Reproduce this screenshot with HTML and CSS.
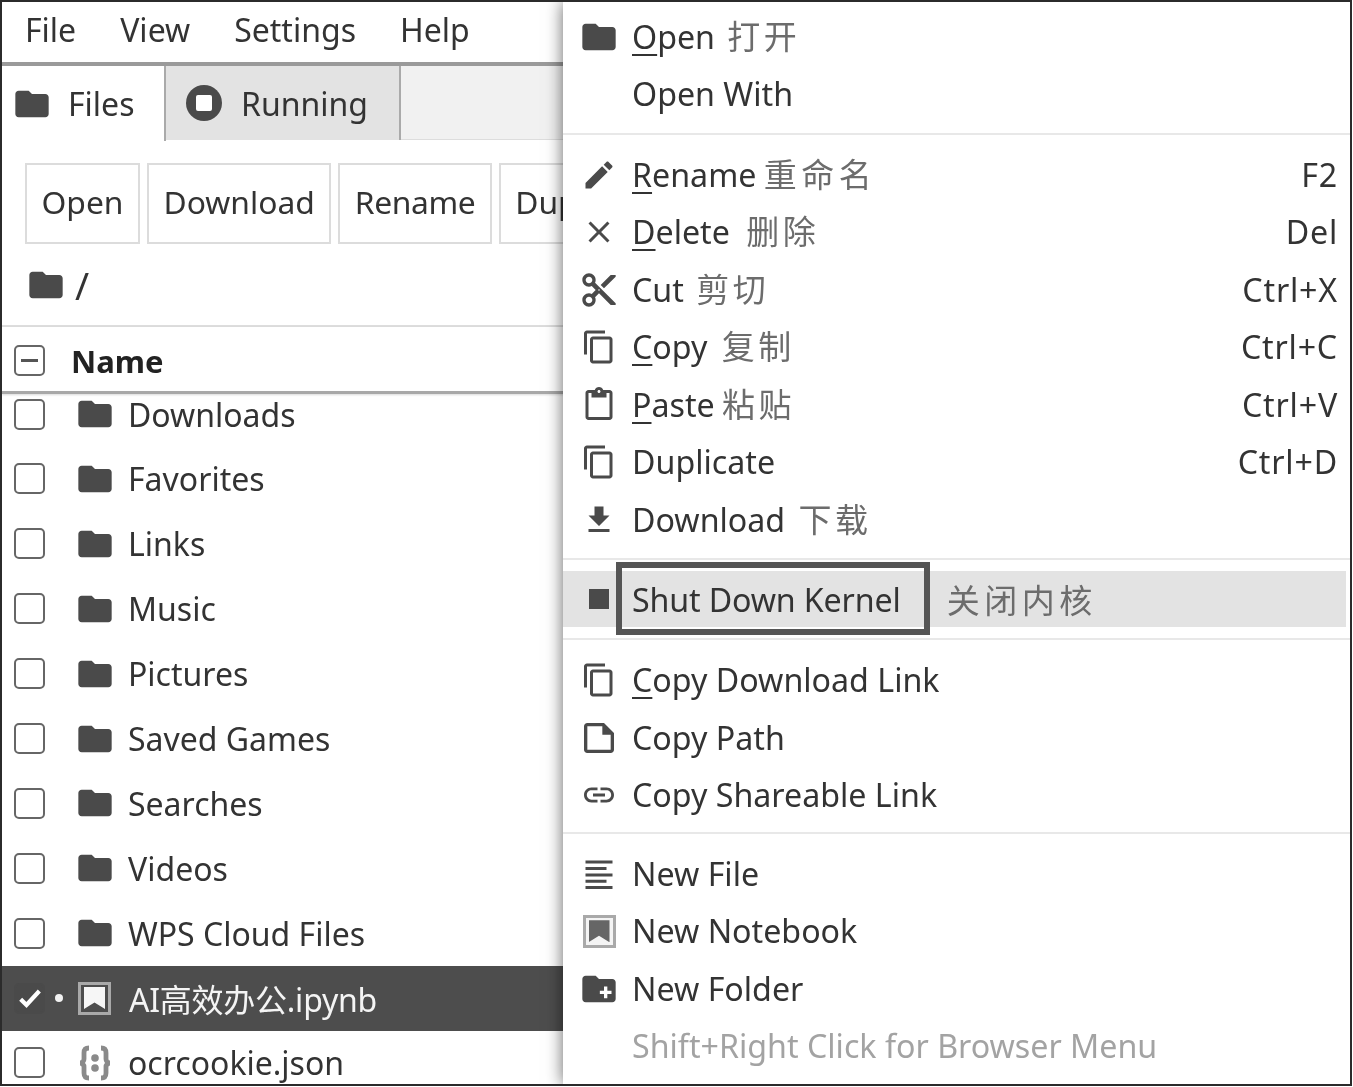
FILE: index.html
```html
<!DOCTYPE html>
<html lang="en">
<head>
<meta charset="utf-8">
<title>JupyterLab context menu</title>
<link rel="stylesheet" href="styles.css">
</head>
<body>
<svg class="defs" width="0" height="0" aria-hidden="true">
  <symbol id="i-folder" viewBox="0 0 24 24"><path d="M10 4H4c-1.1 0-1.99.9-1.99 2L2 18c0 1.1.9 2 2 2h16c1.1 0 2-.9 2-2V8c0-1.1-.9-2-2-2h-8l-2-2z"/></symbol>
  <symbol id="i-edit" viewBox="0 0 24 24"><path d="M3 17.25V21h3.75L17.81 9.94l-3.75-3.75L3 17.25zM20.71 7.04c.39-.39.39-1.02 0-1.41l-2.34-2.34c-.39-.39-1.02-.39-1.41 0l-1.83 1.83 3.75 3.75 1.83-1.83z"/></symbol>
  <symbol id="i-close" viewBox="0 0 24 24"><path d="M19 6.41L17.59 5 12 10.59 6.41 5 5 6.41 10.59 12 5 17.59 6.41 19 12 13.41 17.59 19 19 17.59 13.41 12z"/></symbol>
  <symbol id="i-cut" viewBox="0 0 24 24"><path d="M9.64 7.64c.23-.5.36-1.05.36-1.64 0-2.21-1.79-4-4-4S2 3.79 2 6s1.79 4 4 4c.59 0 1.14-.13 1.64-.36L10 12l-2.36 2.36C7.14 14.13 6.59 14 6 14c-2.21 0-4 1.79-4 4s1.79 4 4 4 4-1.79 4-4c0-.59-.13-1.14-.36-1.64L12 14l7 7h3v-1L9.64 7.64zM6 8c-1.1 0-2-.89-2-2s.9-2 2-2 2 .89 2 2-.9 2-2 2zm0 12c-1.1 0-2-.89-2-2s.9-2 2-2 2 .89 2 2-.9 2-2 2zm6-7.5c-.28 0-.5-.22-.5-.5s.22-.5.5-.5.5.22.5.5-.22.5-.5.5zM19 3l-6 6 2 2 7-7V3z"/></symbol>
  <symbol id="i-copy" viewBox="0 0 24 24"><path d="M16 1H4c-1.1 0-2 .9-2 2v14h2V3h12V1zm3 4H8c-1.1 0-2 .9-2 2v14c0 1.1.9 2 2 2h11c1.1 0 2-.9 2-2V7c0-1.1-.9-2-2-2zm0 16H8V7h11v14z"/></symbol>
  <symbol id="i-paste" viewBox="0 0 24 24"><path d="M19 2h-4.18C14.4.84 13.3 0 12 0c-1.3 0-2.4.84-2.82 2H5c-1.1 0-2 .9-2 2v16c0 1.1.9 2 2 2h14c1.1 0 2-.9 2-2V4c0-1.1-.9-2-2-2zm-7 0c.55 0 1 .45 1 1s-.45 1-1 1-1-.45-1-1 .45-1 1-1zm7 18H5V4h2v3h10V4h2v16z"/></symbol>
  <symbol id="i-download" viewBox="0 0 24 24"><path d="M19 9h-4V3H9v6H5l7 7 7-7zM5 18v2h14v-2H5z"/></symbol>
  <symbol id="i-stop" viewBox="0 0 24 24"><path d="M6 6h12v12H6z"/></symbol>
  <symbol id="i-file" viewBox="0 0 24 24"><path d="M15 3H5c-1.1 0-2 .9-2 2v14c0 1.1.9 2 2 2h14c1.100 0 2-.9 2-2V9l-6-6zm4 16H5V5h9v5h5v9z"/></symbol>
  <symbol id="i-link" viewBox="0 0 24 24"><path d="M3.900 12c0-1.710 1.390-3.100 3.100-3.100h4V7H7c-2.760 0-5 2.240-5 5s2.240 5 5 5h4v-1.900H7c-1.710 0-3.100-1.390-3.100-3.100zM8 13h8v-2H8v2zm9-6h-4v1.900h4c1.710 0 3.100 1.390 3.100 3.100s-1.390 3.100-3.100 3.100h-4V17h4c2.760 0 5-2.240 5-5s-2.240-5-5-5z"/></symbol>
  <symbol id="i-text" viewBox="0 0 24 24"><path d="M3 3h18v2H3zM3 7.300h14v2H3zM3 11.600h18v2H3zM3 15.900h14v2H3zM3 20h18v2H3z"/></symbol>
  <symbol id="i-newfolder" viewBox="0 0 24 24"><path fill-rule="evenodd" d="M10 4H4c-1.100 0-2 .9-2 2v12c0 1.100.9 2 2 2h16c1.100 0 2-.9 2-2V8c0-1.100-.9-2-2-2h-8l-2-2zm5 6.500h2V13h2.500v2H17v2.500h-2V15h-2.500v-2H15z"/></symbol>
  <symbol id="i-json" viewBox="2 2 20 20"><path d="M9 4.500C7 4.500 6.500 5.500 6.500 7v3c0 1.100-.7 2-2 2 1.300 0 2 .9 2 2v3c0 1.500.5 2.500 2.500 2.500M15 4.500c2 0 2.500 1 2.500 2.500v3c0 1.100.7 2 2 2-1.300 0-2 .9-2 2v3c0 1.500-.5 2.500-2.500 2.500" fill="none" stroke="currentColor" stroke-width="2.400"/><circle cx="12" cy="9.500" r="1.900"/><circle cx="12" cy="14.500" r="1.900"/></symbol>
</svg>

<div class="frame">
  <div class="app">
    <nav class="menubar">
      <span>File</span><span>View</span><span>Settings</span><span>Help</span>
    </nav>
    <div class="tabs">
      <div class="tab tab-active">
        <svg class="ico"><use href="#i-folder"/></svg><span>Files</span>
      </div>
      <div class="tab tab-idle">
        <span class="run-ico"><i></i></span><span>Running</span>
      </div>
    </div>
    <div class="toolbar">
      <button class="btn">Open</button>
      <button class="btn">Download</button>
      <button class="btn btn-rename">Rename</button>
      <button class="btn">Duplicate</button>
      <button class="btn">Delete</button>
    </div>
    <div class="crumbs"><svg class="ico"><use href="#i-folder"/></svg><span>/</span></div>
    <div class="listhead">
      <span class="check check-mixed"></span>
      <span class="headname">Name</span>
    </div>
    <div class="list">
      <div class="rows">
        <div class="row"><span class="check"></span><svg class="ico"><use href="#i-folder"/></svg><span>Downloads</span></div>
        <div class="row"><span class="check"></span><svg class="ico"><use href="#i-folder"/></svg><span>Favorites</span></div>
        <div class="row"><span class="check"></span><svg class="ico"><use href="#i-folder"/></svg><span>Links</span></div>
        <div class="row"><span class="check"></span><svg class="ico"><use href="#i-folder"/></svg><span>Music</span></div>
        <div class="row"><span class="check"></span><svg class="ico"><use href="#i-folder"/></svg><span>Pictures</span></div>
        <div class="row"><span class="check"></span><svg class="ico"><use href="#i-folder"/></svg><span>Saved Games</span></div>
        <div class="row"><span class="check"></span><svg class="ico"><use href="#i-folder"/></svg><span>Searches</span></div>
        <div class="row"><span class="check"></span><svg class="ico"><use href="#i-folder"/></svg><span>Videos</span></div>
        <div class="row"><span class="check"></span><svg class="ico"><use href="#i-folder"/></svg><span>WPS Cloud Files</span></div>
        <div class="row row-selected">
          <span class="check check-on"><svg viewBox="0 0 24 24"><path d="M4 13l5 5L20 6" fill="none" stroke="#fff" stroke-width="3.600"/></svg></span>
          <span class="dot"></span>
          <span class="nb nb-light"><i></i></span>
          <span class="fname-zh">AI高效办公.ipynb</span>
        </div>
        <div class="row"><span class="check"></span><svg class="ico ico-json"><use href="#i-json"/></svg><span>ocrcookie.json</span></div>
      </div>
    </div>

    <div class="menu">
      <section class="msec">
        <div class="mi"><svg class="ico"><use href="#i-folder"/></svg><span class="ml"><u>O</u>pen <em class="z-open">打开</em></span></div>
        <div class="mi"><span class="noicon"></span><span class="ml">Open With</span></div>
      </section>
      <section class="msec msec-edit">
        <div class="mi"><svg class="ico ico-s"><use href="#i-edit"/></svg><span class="ml"><u>R</u>ename <em class="z-rename">重命名</em></span><span class="ms">F2</span></div>
        <div class="mi"><svg class="ico ico-s"><use href="#i-close"/></svg><span class="ml"><u>D</u>elete <em class="z-delete">删除</em></span><span class="ms">Del</span></div>
        <div class="mi"><svg class="ico"><use href="#i-cut"/></svg><span class="ml">Cut <em>剪切</em></span><span class="ms">Ctrl+X</span></div>
        <div class="mi"><svg class="ico ico-s"><use href="#i-copy"/></svg><span class="ml"><u>C</u>opy <em class="z-copy">复制</em></span><span class="ms">Ctrl+C</span></div>
        <div class="mi"><svg class="ico ico-s"><use href="#i-paste"/></svg><span class="ml"><u>P</u>aste <em class="z-paste">粘贴</em></span><span class="ms">Ctrl+V</span></div>
        <div class="mi"><svg class="ico ico-s"><use href="#i-copy"/></svg><span class="ml">Duplicate</span><span class="ms">Ctrl+D</span></div>
        <div class="mi"><svg class="ico ico-s"><use href="#i-download"/></svg><span class="ml">Download <em class="z-dl">下载</em></span></div>
      </section>
      <section class="msec msec-hot">
        <div class="mi mi-hot"><svg class="ico"><use href="#i-stop"/></svg><span class="ml"><span class="focusbox">Shut Down Kernel</span><em class="hotzh">关闭内核</em></span></div>
      </section>
      <section class="msec msec-copy">
        <div class="mi"><svg class="ico ico-s"><use href="#i-copy"/></svg><span class="ml"><u>C</u>opy Download Link</span></div>
        <div class="mi"><svg class="ico"><use href="#i-file"/></svg><span class="ml">Copy Path</span></div>
        <div class="mi"><svg class="ico ico-s"><use href="#i-link"/></svg><span class="ml">Copy Shareable Link</span></div>
      </section>
      <section class="msec msec-last">
        <div class="mi"><svg class="ico ico-s"><use href="#i-text"/></svg><span class="ml">New File</span></div>
        <div class="mi"><span class="nb"><i></i></span><span class="ml">New Notebook</span></div>
        <div class="mi"><svg class="ico"><use href="#i-newfolder"/></svg><span class="ml">New Folder</span></div>
        <div class="mi mi-off"><span class="noicon"></span><span class="ml">Shift+Right Click for Browser Menu</span></div>
      </section>
    </div>
  </div>
</div>
</body>
</html>
```
FILE: styles.css
```css
* { box-sizing: border-box; }
html, body { margin: 0; padding: 0; background: #fff; }
body { width: 1353px; height: 1087px; overflow: hidden; font-family: "Noto Sans", "Noto Sans CJK SC", sans-serif; font-size: 32px; color: #333; }
.defs { position: absolute; }
.frame { width: 1352px; height: 1086px; border: 2px solid #2b2b2b; overflow: hidden; filter: blur(0.55px); }
.app { position: relative; height: 100%; background: #fff; }
.ico { width: 40px; height: 40px; fill: #4a4a4a; flex: none; display: block; }
.ico-s { width: 36px; height: 36px; margin: 0 2px; }

.menubar { height: 60px; display: flex; align-items: center; gap: 44px; padding: 0 0 6px 23px; }
.tabs { height: 78px; display: flex; background: #f1f1f1; border-top: 4px solid #9a9a9a; border-bottom: 1px solid #ddd; }
.tab { display: flex; align-items: center; height: 74px; }
.tab-active { width: 164px; background: #fff; padding-left: 10px; gap: 16px; border-right: 2px solid #aaa; margin-bottom: -1px; height: 75px; }
.tab-idle { width: 235px; background: #e3e3e3; padding-left: 20px; gap: 19px; border-right: 2px solid #aaa; }
.run-ico { width: 36px; height: 36px; border-radius: 50%; background: #4a4a4a; display: flex; align-items: center; justify-content: center; }
.run-ico i { width: 16px; height: 16px; background: #fff; border-radius: 2px; display: block; }

.toolbar { display: flex; gap: 7px; padding: 23px 0 0 23px; overflow: hidden; }
.btn { font: inherit; font-size: 31.8px; color: #333; height: 81px; padding: 0 14.5px 4px; background: #fff; border: 2px solid #dcdcdc; flex: none; }
.btn-rename { letter-spacing: -.4px; }
.crumbs { height: 83px; display: flex; align-items: center; gap: 9px; padding-left: 24px; border-bottom: 2px solid #ddd; }
.crumbs span { font-size: 38px; line-height: 1; }

.listhead { height: 67px; display: flex; align-items: center; padding: 2px 0 0 12px; gap: 26px; border-bottom: 3px solid #a8a8a8; box-shadow: 0 1px 2px rgba(0,0,0,.15); position: relative; z-index: 1; background: #fff; }
.headname { font-weight: 700; color: #222; font-size: 31px; padding-top: 2px; }

.list { height: 690px; overflow: hidden; }
.rows { margin-top: -12.4px; }
.row { height: 64.9px; display: flex; align-items: center; padding-left: 12px; }
.row .ico { margin-left: 29.5px; margin-right: 13.5px; }
.row .nb { margin-left: 15px; margin-right: 18px; }
.row-selected { background: #4d4d4d; color: #f4f4f4; }
.fname-zh { letter-spacing: -.25px; }

.check { width: 31px; height: 31px; border: 2px solid #666; border-radius: 5px; background: #fff; flex: none; display: flex; align-items: center; justify-content: center; }
.check-mixed::before { content: ""; width: 17px; height: 3px; background: #555; }
.check-on { background: #4a4a4a; border-color: #4a4a4a; }
.check-on svg { width: 28px; height: 28px; flex: none; }
.dot { width: 8px; height: 8px; border-radius: 50%; background: #f2f2f2; margin-left: 10px; flex: none; }
.nb { width: 33px; height: 33px; border: 3px solid #a9a9a9; display: flex; align-items: center; justify-content: center; flex: none; background: #f4f4f4; margin: 0 3.5px; }
.nb i { width: 21px; height: 22px; background: #666; clip-path: polygon(0 0, 100% 0, 100% 100%, 50% 70%, 0 100%); display: block; }
.nb-light { background: #4d4d4d; }
.nb-light i { background: #f6f6f6; }
.ico-json { fill: #8a8a8a; color: #8a8a8a; }

.menu { position: absolute; top: 0; bottom: 0; left: 561px; width: 787px; background: #fff; box-shadow: 0 0 16px rgba(0,0,0,.6); z-index: 2; font-size: 32.2px; }
.msec { padding: 6px 0 10px; border-bottom: 2px solid #e8e8e8; }
.msec + .msec { padding-top: 11px; }
.msec-edit.msec { padding-bottom: 9px; }
.msec-hot.msec { padding: 11px 4px 11px 0; }
.msec-copy.msec { padding: 12px 0 8px; }
.msec-last { border-bottom: 0; }
.mi { height: 57.5px; display: flex; align-items: center; padding: 0 12px 0 16px; }
.noicon { width: 40px; flex: none; }
.ml { margin-left: 13px; flex: 1; white-space: nowrap; line-height: 46px; }
.ms { flex: none; letter-spacing: .8px; line-height: 46px; }
.ml u { text-decoration-thickness: 2px; text-underline-offset: 5px; }
em { font-style: normal; font-size: 33px; line-height: 1; color: #6c6c6c; letter-spacing: 3.500px; margin-left: 4px; }
.z-open { margin-left: 4px; }
.z-rename { margin-left: -1px; letter-spacing: 4.500px; }
.z-delete { margin-left: 8px; }
.z-copy { margin-left: 6px; }
.z-paste { margin-left: -1px; }
.z-dl { margin-left: 5px; }
.mi-hot { background: #e3e3e3; height: 56px; }
.focusbox { display: inline-flex; align-items: center; height: 73px; border: 6px solid #555; margin: -8px 0 -8px -16px; padding: 3px 23px 0 10px; vertical-align: middle; letter-spacing: -.15px; }
.hotzh { display: inline-block; margin-left: 17px; margin-top: 3px; vertical-align: middle; letter-spacing: 4.500px; }
.mi-off { color: #a3a3a3; }
```
